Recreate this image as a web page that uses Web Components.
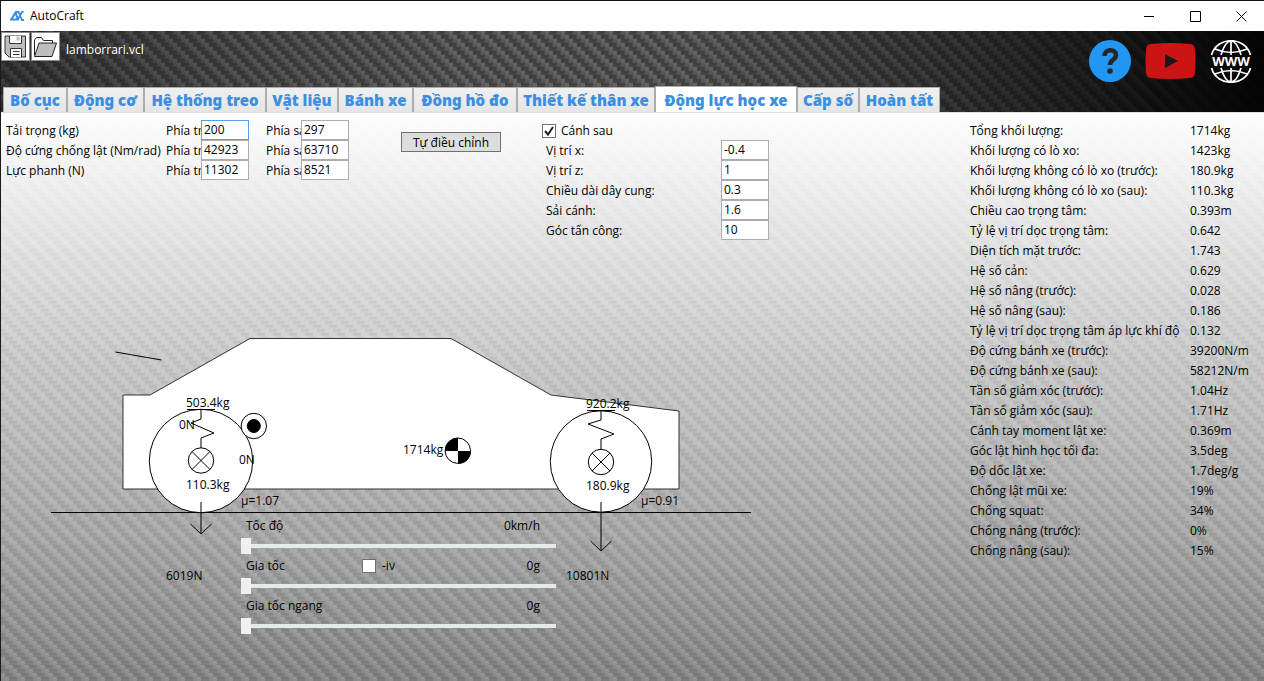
<!DOCTYPE html>
<html lang="vi">
<head>
<meta charset="utf-8">
<title>AutoCraft</title>
<style>
  html, body { margin: 0; min-height: 100%; }
  body {
    font: 12px/20px "Open Sans", "Noto Sans", sans-serif;
    color: #000;
    --accent: #3c8fe0;
    --line: #acacac;
    --weave: url("data:image/svg+xml,%3Csvg xmlns='http://www.w3.org/2000/svg' width='16' height='16'%3E%3Cdefs%3E%3ClinearGradient id='g' x2='0' y2='1'%3E%3Cstop stop-color='%23fff' stop-opacity='.18'/%3E%3Cstop offset='1' stop-color='%23fff' stop-opacity='.08'/%3E%3C/linearGradient%3E%3C/defs%3E%3Cg fill='url(%23g)'%3E%3Crect y='0' width='4' height='8'/%3E%3Crect x='4' y='4' width='4' height='8'/%3E%3Crect x='8' y='8' width='4' height='8'/%3E%3Crect x='12' y='12' width='4' height='8'/%3E%3Crect x='12' y='-4' width='4' height='8'/%3E%3C/g%3E%3Cg fill='%23000' fill-opacity='.06'%3E%3Crect x='4' y='0' width='8' height='2'/%3E%3Crect x='8' y='4' width='8' height='2'/%3E%3Crect x='12' y='8' width='4' height='2'/%3E%3Crect x='0' y='8' width='4' height='2'/%3E%3Crect x='0' y='12' width='8' height='2'/%3E%3C/g%3E%3C/svg%3E");
  }
</style>
</head>
<body>
<app-window>
  <title-bar slot="title">AutoCraft</title-bar>
  <tool-ribbon slot="ribbon" file="lamborrari.vcl"></tool-ribbon>
  <tab-strip slot="tabs"></tab-strip>
  <dynamics-panel></dynamics-panel>
</app-window>

<script>
const define = (name, html, setup) => {
  const template = document.createElement('template');
  template.innerHTML = html;
  customElements.define(name, class extends HTMLElement {
    constructor() {
      super();
      this.attachShadow({ mode: 'open' }).append(template.content.cloneNode(true));
    }
    connectedCallback() { if (setup) setup(this, this.shadowRoot); }
  });
};

define('app-window', `
<style>
  :host { display: flex; flex-direction: column; min-height: 100vh; box-sizing: border-box;
    border-top: 1px solid #111; border-left: 1px solid #1a1a1a; }
  header { background: linear-gradient(90deg, rgba(0,0,0,.4) 0, rgba(0,0,0,.2) 14%, rgba(0,0,0,0) 36%, rgba(0,0,0,0) 55%, rgba(0,0,0,.45) 76%, rgba(0,0,0,.8) 92%, rgba(0,0,0,.95) 100%),
    var(--weave), #444; }
  main { flex: 1; display: flex; flex-direction: column; border-top: 1px solid #dcdcdc;
    background: linear-gradient(180deg, rgba(255,255,255,.98) 0, rgba(255,255,255,.7) 18%, rgba(255,255,255,.35) 45%, rgba(255,255,255,0) 100%),
      var(--weave), linear-gradient(180deg, #b4b4b4 0, #a0a0a0 50%, #7c7c7c 100%); }
</style>
<slot name="title"></slot>
<header><slot name="ribbon"></slot><slot name="tabs"></slot></header>
<main><slot></slot></main>`);

define('title-bar', `
<style>
  :host { display: flex; align-items: center; height: 30px; background: #fff; padding-left: 9px; }
  .logo { width: 14px; height: 10px; margin-right: 6px; }
  .name { flex: 1; }
  button { width: 46px; height: 30px; padding: 0; border: 0; background: none; display: grid; place-items: center; }
  button svg { width: 11px; height: 11px; fill: none; stroke: #000; }
</style>
<svg class="logo" viewBox="0 0 14 10" fill="none" stroke="#3c8fe0"><path d="M1 9 5.500 1.500 8 9M0 8.500h9" stroke-width="2"/><path d="M6 1h2.500l3.500 8h2M13.500 1H12L8 8" stroke-width="1.800"/></svg>
<span class="name"><slot></slot></span>
<button aria-label="Minimize"><svg viewBox="0 0 11 11"><path d="M0 5.500h10"/></svg></button>
<button aria-label="Maximize"><svg viewBox="0 0 11 11"><path d="M.5.5h10v10H.5z"/></svg></button>
<button aria-label="Close"><svg viewBox="0 0 11 11"><path d="M.5.5l10 10M10.500.5l-10 10"/></svg></button>`);

define('tool-ribbon', `
<style>
  :host { display: flex; justify-content: space-between; height: 54px; }
  .files { display: flex; align-items: flex-start; padding: 1px 0; gap: 1px; }
  button { width: 29px; height: 29px; padding: 0; box-sizing: border-box; border: 1px solid #8a8a8a; background: #fff; }
  button svg { display: block; width: 27px; height: 27px; }
  .file { color: #fff; padding: 8px 5px; }
  .links { display: flex; align-items: center; gap: 14px; padding: 6px 12px 0 0; }
  a, .links svg { display: block; }
</style>
<div class="files">
  <button aria-label="Save"><svg viewBox="0 0 27 27" stroke="#333"><path d="M3 3h20.500v21H7l-4-4z" fill="#bebebe"/><path d="M7.500 3v7.500h12V3" fill="#fff"/><path d="M14.500 3.500h3v4h-3z" fill="#bebebe" stroke="none"/><path d="M8.500 24v-8.500h11V24" fill="#fff"/><path d="M11 18.500h6.500M11 21.500h6.500" /></svg></button>
  <button aria-label="Open"><svg viewBox="0 0 27 27" stroke="#222" stroke-linejoin="round"><path d="M2.500 22V7l2-2.500h5l2 3h9V10" fill="#fff"/><path d="M7 10h17.500L20 23.500H2.500z" fill="#bebebe"/></svg></button>
  <span class="file"></span>
</div>
<nav class="links">
  <a href="#help" aria-label="Help"><svg width="42" height="42" viewBox="0 0 42 42"><circle cx="21" cy="21" r="21" fill="#2196f3"/><path d="M15.500 16c0-7.500 11.500-7.500 11.500-1 0 5-6 4.500-6 10" fill="none" stroke="#262626" stroke-width="4.500"/><circle cx="21" cy="31" r="2.800" fill="#262626"/></svg></a>
  <a href="#video" aria-label="Video"><svg width="51" height="36" viewBox="0 0 51 36"><path d="M6 1Q25 -1 45 1Q50 1.500 50 7Q51 18 50 29Q50 34.500 45 35Q25 37 6 35Q1 34.500 1 29Q0 18 1 7Q1 1.500 6 1z" fill="#cc1414"/><path d="M20 11l13 7-13 7z" fill="#181818"/></svg></a>
  <a href="#web" aria-label="Website"><svg width="42" height="43" viewBox="0 0 42 43"><g fill="none" stroke="#fff" stroke-width="1.700"><path d="M1.500 15C7-4 35-4 40.500 15M1.500 28C7 47 35 47 40.500 28M21 1v14M21 28v14M11 15C14 5 18 1 21 1s7 4 10 14M11 28c3 10 7 14 10 14s7-4 10-14M5 9q16 7 32 0M5 34q16-7 32 0"/></g><text x="21" y="26" text-anchor="middle" fill="#fff" font-size="13" font-weight="700" font-family="Open Sans, sans-serif">WWW</text></svg></a>
</nav>`, (host, root) => { root.querySelector('.file').textContent = host.getAttribute('file'); });

define('tab-strip', `
<style>
  :host { display: block; padding-left: 2px; }
  div { display: grid; grid-template-columns: 64px 77px 122px 72px 75px 104px 138px 142px 62px 81px; align-items: end; height: 27px; }
  button { box-sizing: border-box; height: 25px; min-width: 0; padding: 0; border: 1px solid var(--line); border-bottom: 0;
    background: linear-gradient(#f0f0f0, #e5e5e5); color: var(--accent); font: 900 15px/24px "Noto Sans", "Open Sans", sans-serif; white-space: nowrap; }
  button[aria-selected="true"] { height: 27px; background: #fff; margin-bottom: -1px; }
</style>
<div role="tablist"></div>`, (host, root) => {
  const names = ['Bố cục', 'Động cơ', 'Hệ thống treo', 'Vật liệu', 'Bánh xe', 'Đồng hồ đo', 'Thiết kế thân xe', 'Động lực học xe', 'Cấp số', 'Hoàn tất'];
  root.querySelector('div').innerHTML = names.map((n, i) =>
    `<button role="tab" aria-selected="${i === 7}">${n}</button>`).join('');
});

define('dynamics-panel', `
<style>
  :host { flex: 1; display: flex; justify-content: space-between; }
  .forms { display: flex; align-items: flex-start; padding-top: 7px; }
  .auto { margin: 12px 41px 0 52px; }
  button { width: 100px; height: 20px; box-sizing: border-box; padding: 0; border: 1px solid #707070; background: #ddd;
    font: inherit; line-height: 20px; color: #000; display: block; }
  .stage { display: grid; }
  .stage > * { grid-area: 1 / 1; }
  motion-sliders { margin: 276px 0 0 240px; justify-self: start; align-self: start; }
</style>
<section>
  <div class="forms">
    <axle-form></axle-form>
    <div class="auto"><button>Tự điều chỉnh</button></div>
    <wing-form></wing-form>
  </div>
  <div class="stage">
    <car-diagram></car-diagram>
    <motion-sliders></motion-sliders>
  </div>
</section>
<stat-list></stat-list>`);

const inputCss = `
  input[type="text"] { box-sizing: border-box; width: 48px; height: 20px; margin: 0; padding: 0 0 1px 2px;
    border: 1px solid #abadb3; border-radius: 0; background: #fff; font: inherit; line-height: 17px; color: #000; outline: 0; }
  input.active { border-color: #569de5; }`;

const checkCss = `
  input[type="checkbox"] { appearance: none; box-sizing: border-box; width: 14px; height: 14px; margin: 0; border: 1px solid #707070; background: #fff; }
  input[type="checkbox"]:checked { background: #fff url("data:image/svg+xml,%3Csvg xmlns='http://www.w3.org/2000/svg' viewBox='0 0 12 12'%3E%3Cpath d='M2 6l3 3.500L10 2' fill='none' stroke='%23212121' stroke-width='2'/%3E%3C/svg%3E"); }`;

define('axle-form', `
<style>
  :host { display: block; padding-left: 5px; }
  div { display: grid; grid-template-columns: 160px 35px 48px 17px 35px 48px; height: 20px; white-space: nowrap; }
  span, label { line-height: 22px; height: 20px; }
  label { overflow: hidden; }
  label:nth-of-type(2) { grid-column: 5; }
  ${inputCss}
</style>`, (host, root) => {
  const rows = [['Tải trọng (kg)', 200, 297], ['Độ cứng chống lật (Nm/rad)', 42923, 63710], ['Lực phanh (N)', 11302, 8521]];
  rows.forEach(([name, front, rear], i) => root.append(document.createRange().createContextualFragment(
    `<div><span>${name}</span><label for="f${i}">Phía trước:</label><input type="text" id="f${i}" value="${front}"${i ? '' : ' class="active"'}><label for="r${i}">Phía sau:</label><input type="text" id="r${i}" value="${rear}"></div>`)));
});

define('wing-form', `
<style>
  :host { display: block; line-height: 22px; }
  .toggle { display: flex; align-items: center; gap: 5px; padding-top: 2px; height: 18px; }
  .row { display: grid; grid-template-columns: 175px 48px; height: 20px; padding-left: 4px; }
  ${inputCss}${checkCss}
</style>
<div class="toggle"><input type="checkbox" id="wing" checked><label for="wing">Cánh sau</label></div>`, (host, root) => {
  [['Vị trí x:', '-0.4'], ['Vị trí z:', '1'], ['Chiều dài dây cung:', '0.3'], ['Sải cánh:', '1.6'], ['Góc tấn công:', '10']]
    .forEach(([name, value], i) => root.append(document.createRange().createContextualFragment(
      `<div class="row"><label for="w${i}">${name}</label><input type="text" id="w${i}" value="${value}"></div>`)));
});

define('car-diagram', `
<style>
  :host { display: block; }
  svg { display: block; width: 779px; height: 400px; fill: none; stroke: #000; }
  text { fill: #000; stroke: none; }
  .white { fill: #fff; } .ink { fill: #000; }
  .body { fill: #fff; stroke: #333; }
</style>
<svg viewBox="1 240 779 400">
  <path class="body" d="M123 489V395H150L250 338.500H451L551 395L679 411V489Z"/>
  <path d="M115.500 352L161.500 360"/>
  <circle class="white" cx="201" cy="461" r="51.700"/>
  <circle class="white" cx="601" cy="461.500" r="50.700"/>
  <path d="M51 512.500H751"/>
  <path d="M187 409.500h28M201 409v10l-10 4 23 10-13 5v10M192 451.500l18 18m0-18l-18 18M201 502v32M190.500 524l10.500 10 10.500-10"/>
  <circle cx="201" cy="460.500" r="12.700"/>
  <path d="M587 410.500h28M601 410v10l-13 4 26 10-13 5v10M592 453l18 18m0-18l-18 18M601 502v49M590.500 541l10.500 10 10.500-10"/>
  <circle cx="601" cy="462" r="12.700"/>
  <circle class="white" cx="253.800" cy="426" r="12.700"/><circle class="ink" cx="253.800" cy="426" r="6.500"/>
  <circle class="white" cx="457.800" cy="450.700" r="12.700"/>
  <path class="ink" stroke="none" d="M458 451h-13a13 13 0 0 1 13-13zM458 451h13a13 13 0 0 1-13 13z"/>
  <text x="186" y="407">503.4kg</text><text x="179" y="429">0N</text><text x="239" y="464">0N</text>
  <text x="186" y="489">110.3kg</text><text x="241" y="505">μ=1.07</text><text x="166" y="580">6019N</text>
  <text x="403" y="454">1714kg</text><text x="586" y="408">920.2kg</text><text x="586" y="490">180.9kg</text>
  <text x="641" y="505">μ=0.91</text><text x="566" y="580">10801N</text>
</svg>`);

define('motion-sliders', `
<style>
  :host { display: block; width: 315px; }
  .head { display: grid; grid-template-columns: 116px 1fr auto; height: 20px; padding: 0 16px 0 5px; }
  .head output { grid-column: 3; }
  .check { display: flex; align-items: center; gap: 6px; }
  input[type="range"] { appearance: none; display: block; width: 100%; height: 20px; margin: 0; background: none; }
  input[type="range"]::-webkit-slider-runnable-track { height: 4px; background: #e7eaea; }
  input[type="range"]::-webkit-slider-thumb { appearance: none; width: 10px; height: 16px; margin-top: -6px; background: #f0f0f0; border-radius: 0; }
  ${checkCss}
</style>
<div class="head"><label for="v">Tốc độ</label><output for="v">0km/h</output></div>
<input type="range" id="v" value="0">
<div class="head"><label for="a">Gia tốc</label><span class="check"><input type="checkbox" id="iv"><label for="iv">-iv</label></span><output for="a">0g</output></div>
<input type="range" id="a" value="0">
<div class="head"><label for="l">Gia tốc ngang</label><output for="l">0g</output></div>
<input type="range" id="l" value="0">`);

define('stat-list', `
<style>
  :host { display: block; padding: 8px 0 0; width: 294px; }
  table { border-collapse: collapse; table-layout: fixed; width: 100%; }
  th, td { padding: 0; height: 20px; text-align: left; font-weight: 400; white-space: nowrap; }
  th { width: 220px; }
  th span { display: block; width: 210px; overflow: hidden; }
</style>
<table><tbody></tbody></table>`, (host, root) => {
  root.querySelector('tbody').innerHTML = [
    ['Tổng khối lượng:', '1714kg'], ['Khối lượng có lò xo:', '1423kg'],
    ['Khối lượng không có lò xo (trước):', '180.9kg'], ['Khối lượng không có lò xo (sau):', '110.3kg'],
    ['Chiều cao trọng tâm:', '0.393m'], ['Tỷ lệ vị trí dọc trọng tâm:', '0.642'],
    ['Diện tích mặt trước:', '1.743'], ['Hệ số cản:', '0.629'], ['Hệ số nâng (trước):', '0.028'],
    ['Hệ số nâng (sau):', '0.186'], ['Tỷ lệ vị trí dọc trọng tâm áp lực khí động:', '0.132'],
    ['Độ cứng bánh xe (trước):', '39200N/m'], ['Độ cứng bánh xe (sau):', '58212N/m'],
    ['Tần số giảm xóc (trước):', '1.04Hz'], ['Tần số giảm xóc (sau):', '1.71Hz'],
    ['Cánh tay moment lật xe:', '0.369m'], ['Góc lật hình học tối đa:', '3.5deg'],
    ['Độ dốc lật xe:', '1.7deg/g'], ['Chống lật mũi xe:', '19%'], ['Chống squat:', '34%'],
    ['Chống nâng (trước):', '0%'], ['Chống nâng (sau):', '15%']
  ].map(([k, v]) => `<tr><th scope="row"><span>${k}</span></th><td>${v}</td></tr>`).join('');
});
</script>
</body>
</html>
